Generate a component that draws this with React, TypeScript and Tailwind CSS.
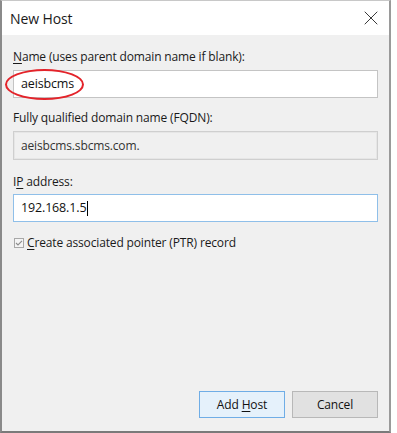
import { X } from 'lucide-react';

const font = { fontFamily: '"Open Sans", "Noto Sans", sans-serif' };

function Label({ children }: { children: React.ReactNode }) {
  return <div className="h-4 text-[12px] leading-4 tracking-[-0.15px] text-[#1a1a1a]">{children}</div>;
}

export default function App() {
  return (
    <div className="h-[433px] w-[397px] bg-white" style={font}>
      <div className="flex h-[433px] w-[391px] flex-col border-b-2 border-l-2 border-r-2 border-t border-b-[#7a7a7a] border-l-[#8a8a8a] border-r-[#9a9a9a] border-t-[#c8c8c8]">
        <div className="flex h-[34px] shrink-0 items-center justify-between bg-white pl-2 pr-[6px]">
          <span className="text-[14px] tracking-[-0.1px] text-[#1a1a1a]">New Host</span>
          <X className="h-6 w-6 text-[#222]" strokeWidth={0.9} />
        </div>

        <div className="flex flex-1 flex-col bg-[#f0f0f0] px-[11px] pb-[13px] pt-[14px]">
          <Label>
            <span className="underline underline-offset-2">N</span>ame (uses parent domain name if blank):
          </Label>
          <div className="relative mt-[5px] flex h-[28px] items-center border border-[#c4c4c4] bg-white pl-[7px] text-[12.5px] tracking-[-0.15px] text-[#111]">
            aeisbcms
            <span className="absolute left-[-9px] top-[-2px] h-[31px] w-[79px] rounded-[50%] border-2 border-[#e3232a]" />
          </div>

          <div className="mt-3">
            <Label>Fully qualified domain name (FQDN):</Label>
          </div>
          <div className="mt-[5px] flex h-[29px] items-center border border-[#cfcfcf] bg-[#f0f0f0] pl-[7px] text-[12px] tracking-[-0.15px] text-[#333] shadow-[inset_0_0_0_1px_#e6e6e6]">
            aeisbcms.sbcms.com.
          </div>

          <div className="mt-[14px]">
            <Label>
              I<span className="underline underline-offset-2">P</span> address:
            </Label>
          </div>
          <div className="mt-1 flex h-[28px] items-center border border-[#8fbfe9] bg-white pl-[7px] text-[12.5px] tracking-[-0.15px] text-[#111]">
            192.168.1.5
            <span className="ml-px inline-block h-[15px] w-px bg-black" />
          </div>

          <div className="mt-[13px] flex h-4 items-center gap-[3px] pl-px">
            <svg width="10" height="10" viewBox="0 0 10 10" className="shrink-0">
              <rect x="0.5" y="0.5" width="9" height="9" fill="#f4f4f4" stroke="#a8a8a8" />
              <path d="M2 5 L4 7 L8 2.8" fill="none" stroke="#8c8c8c" strokeWidth="1.1" />
            </svg>
            <span className="text-[12px] leading-4 tracking-[-0.15px] text-[#1a1a1a]">
              <span className="underline underline-offset-2">C</span>reate associated pointer (PTR) record
            </span>
          </div>

          <div className="flex-1" />

          <div className="flex justify-end gap-[7px]">
            <button className="h-[27px] w-[86px] border border-[#6fade6] bg-[#e5f1fb] text-[12px] tracking-[-0.15px] text-[#111]">
              Add <span className="underline underline-offset-2">H</span>ost
            </button>
            <button className="h-[27px] w-[86px] border border-[#b8b8b8] bg-[#e1e1e1] text-[12px] tracking-[-0.15px] text-[#111]">
              Cancel
            </button>
          </div>
        </div>
      </div>
    </div>
  );
}
